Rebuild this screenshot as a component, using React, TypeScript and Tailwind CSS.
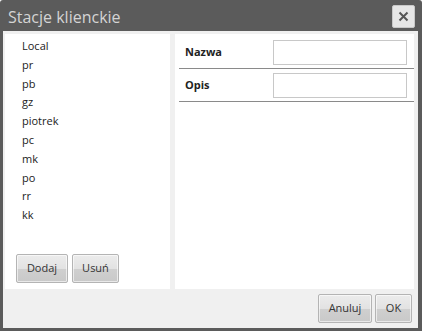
import React from "react";

const items = ["Local", "pr", "pb", "gz", "piotrek", "pc", "mk", "po", "rr", "kk"];

function Btn({ label, w }: { label: string; w: string }) {
  return (
    <button
      className={`${w} h-[29px] rounded-[2px] border border-[#b4b4b4] text-[11px] text-[#333] bg-[linear-gradient(to_bottom,#ececec_0%,#e2e2e2_50%,#cfcfcf_51%,#c9c9c9_100%)] shadow-[inset_0_0_0_1px_rgba(255,255,255,0.6)] flex items-center justify-center`}
    >
      {label}
    </button>
  );
}

export default function App() {
  return (
    <div
      className="w-[422px] h-[331px] bg-[#5b5b5b] rounded-t-[3px] flex flex-col pl-[3px] pr-[4px] pb-[3px]"
      style={{ fontFamily: '"Open Sans", "Noto Sans", sans-serif' }}
    >
      <div className="h-[31px] flex items-start justify-between">
        <div className="pl-[5px] pt-[7px] text-[16px] leading-[20px] text-[#d4d4d4]">Stacje klienckie</div>
        <div className="mt-[5px] mr-[3px] w-[23px] h-[23px] rounded-[2px] bg-[#e6e6e6] border border-[#c8c8c8] flex items-center justify-center">
          <svg width="11" height="11" viewBox="0 0 11 11">
            <path d="M1.5 1.5 L9.5 9.5 M9.5 1.5 L1.5 9.5" stroke="#555" strokeWidth="2" strokeLinecap="butt" />
          </svg>
        </div>
      </div>
      <div className="flex-1 bg-[#f0f0f0] flex flex-col">
        <div className="flex-1 flex pt-[3px] pl-[2px] pr-[4px] gap-[5px]">
          <div className="w-[165px] bg-white flex flex-col justify-between">
            <div className="pl-[17px] pt-[3px] flex flex-col">
              {items.map((it) => (
                <div key={it} className="h-[18.8px] leading-[18.8px] text-[11px] text-[#222]">
                  {it}
                </div>
              ))}
            </div>
            <div className="flex gap-[4px] pl-[11px] pb-[6px]">
              <Btn label="Dodaj" w="w-[52px]" />
              <Btn label="Usuń" w="w-[47px]" />
            </div>
          </div>
          <div className="flex-1 bg-white flex flex-col pt-[6px] pl-[4px]">
            <div className="flex items-center h-[29px] border-b border-[#8a8a8a] pb-[4px]">
              <div className="w-[94px] pl-[6px] text-[11px] font-bold text-[#222]">Nazwa</div>
              <div className="w-[134px] h-[25px] border border-[#c8c8c8]" />
            </div>
            <div className="flex items-center h-[33px] border-b border-[#8a8a8a] pt-[4px] pb-[4px]">
              <div className="w-[94px] pl-[6px] text-[11px] font-bold text-[#222]">Opis</div>
              <div className="w-[134px] h-[25px] border border-[#c8c8c8]" />
            </div>
          </div>
        </div>
        <div className="h-[39px] flex items-center justify-end gap-[3px] pr-[6px]">
          <Btn label="Anuluj" w="w-[54px]" />
          <Btn label="OK" w="w-[37px]" />
        </div>
      </div>
    </div>
  );
}
